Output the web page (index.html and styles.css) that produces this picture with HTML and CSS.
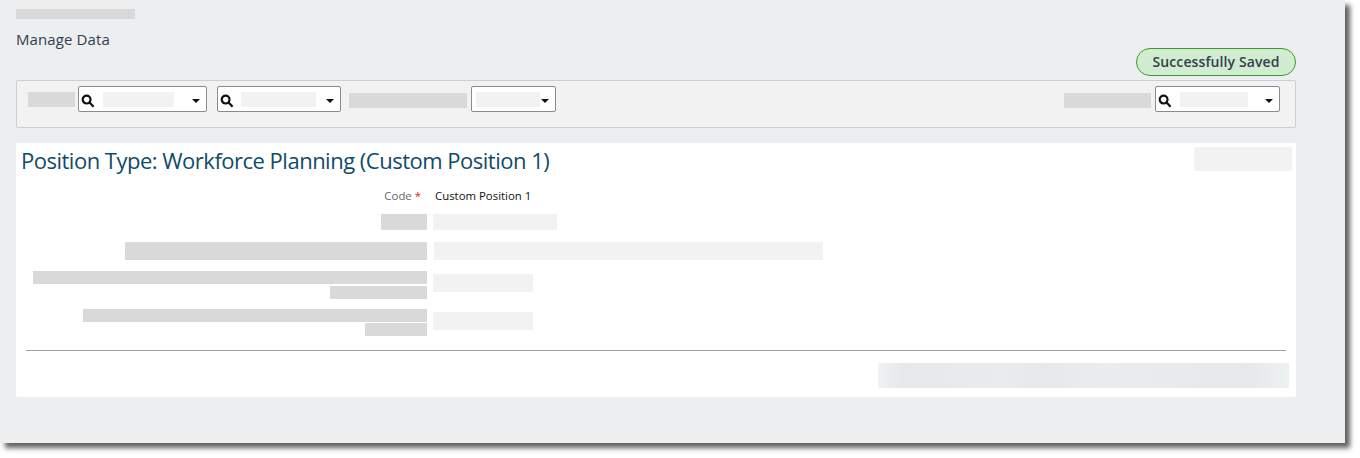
FILE: index.html
```html
<!DOCTYPE html>
<html lang="en">

<head>
    <meta charset="UTF-8">
    <meta name="viewport" content="width=device-width, initial-scale=1.0">
    <title>Manage Data</title>
    <link rel="stylesheet" href="styles.css">
</head>

<body>
    <div class="screen">
        <div class="crumb"></div>
        <div class="pageTitle">Manage Data</div>
        <div class="savedRow">
            <span class="savedPill">Successfully Saved</span>
        </div>

        <div class="toolbar">
            <div class="mask labelA"></div>
            <div class="select selectA">
                <svg class="searchIcon" viewBox="0 0 14 14"><circle cx="5.6" cy="5.6" r="3.9" /><path d="M8.6 8.6 12.6 12.8" /></svg>
                <div class="selectValue valueA"></div>
                <span class="caret"></span>
            </div>
            <div class="select selectB">
                <svg class="searchIcon" viewBox="0 0 14 14"><circle cx="5.6" cy="5.6" r="3.9" /><path d="M8.6 8.6 12.6 12.8" /></svg>
                <div class="selectValue valueB"></div>
                <span class="caret"></span>
            </div>
            <div class="mask labelB"></div>
            <div class="select selectC">
                <div class="selectValue valueC"></div>
                <span class="caret"></span>
            </div>
            <div class="mask labelC"></div>
            <div class="select selectD">
                <svg class="searchIcon" viewBox="0 0 14 14"><circle cx="5.6" cy="5.6" r="3.9" /><path d="M8.6 8.6 12.6 12.8" /></svg>
                <div class="selectValue valueD"></div>
                <span class="caret"></span>
            </div>
        </div>

        <div class="card">
            <div class="cardHead">
                <h1>Position Type: Workforce Planning (Custom Position 1)</h1>
                <div class="headAction"></div>
            </div>

            <div class="formRow rowCode">
                <div class="formLabel">Code <span class="required">*</span></div>
                <div class="formValue">Custom Position 1</div>
            </div>
            <div class="formRow rowOne">
                <div class="formLabel"><div class="mask lineOne"></div></div>
                <div class="fieldMask fieldOne"></div>
            </div>
            <div class="formRow rowTwo">
                <div class="formLabel"><div class="mask lineTwo"></div></div>
                <div class="fieldMask fieldTwo"></div>
            </div>
            <div class="formRow rowThree">
                <div class="formLabel">
                    <div class="mask lineThreeA"></div>
                    <div class="mask lineThreeB"></div>
                </div>
                <div class="fieldMask fieldThree"></div>
            </div>
            <div class="formRow rowFour">
                <div class="formLabel">
                    <div class="mask lineFourA"></div>
                    <div class="mask lineFourB"></div>
                </div>
                <div class="fieldMask fieldThree"></div>
            </div>

            <div class="divider"></div>
            <div class="footerMask"></div>
        </div>
    </div>
</body>

</html>
```

FILE: styles.css
```css
html,
body {
    margin: 0;
    padding: 0;
    background: white;
    overflow: hidden;
}

body {
    font-family: 'Open Sans', 'Noto Sans', sans-serif;
    width: 1360px;
    height: 458px;
}

.screen {
    box-sizing: border-box;
    width: 1345px;
    height: 443px;
    padding: 9px 49px 0 16px;
    background: #edeef0;
    box-shadow: 5px 5px 5px #606060;
}

.mask {
    background: #d9d9d9;
}

.crumb {
    width: 119px;
    height: 10px;
    background: #d9d9d9;
}

.pageTitle {
    margin-top: 10px;
    height: 20px;
    line-height: 20px;
    font-size: 15px;
    letter-spacing: 0.1px;
    color: #32404f;
}

.savedRow {
    display: flex;
    justify-content: flex-end;
    margin-top: -1px;
}

.savedPill {
    box-sizing: border-box;
    width: 160px;
    height: 28px;
    line-height: 26px;
    text-align: center;
    font-size: 14px;
    font-weight: 600;
    letter-spacing: 0.1px;
    color: #32404f;
    background: #d1ecd0;
    border: 1px solid #3c9a2e;
    border-radius: 14px;
}

.toolbar {
    box-sizing: border-box;
    display: flex;
    align-items: flex-start;
    height: 48px;
    margin-top: 4px;
    padding: 5px 15px 0 11px;
    background: #f2f2f2;
    border: 1px solid #c9cfd2;
    border-radius: 2px;
}

.labelA {
    width: 47px;
    height: 15px;
    margin: 6px 3px 0 0;
}

.labelB {
    width: 118px;
    height: 15px;
    margin: 7px 4px 0 8px;
}

.labelC {
    width: 87px;
    height: 15px;
    margin: 7px 4px 0 auto;
}

.select {
    box-sizing: border-box;
    position: relative;
    display: flex;
    align-items: center;
    height: 26px;
    background: white;
    border: 1px solid #848d96;
    border-radius: 2px;
}

.selectA {
    width: 129px;
}

.selectB {
    width: 124px;
    margin-left: 10px;
}

.selectC {
    width: 85px;
}

.selectD {
    width: 125px;
}

.searchIcon {
    flex: none;
    width: 14px;
    height: 14px;
    margin: 4px 0 0 2px;
    fill: none;
    stroke: #111;
    stroke-width: 2.2;
}

.selectValue {
    height: 15px;
    background: #f2f2f2;
}

.valueA {
    width: 71px;
    margin-left: 8px;
}

.valueB {
    width: 75px;
    margin-left: 7px;
}

.valueC {
    width: 64px;
    margin-left: 4px;
}

.valueD {
    width: 68px;
    margin-left: 8px;
}

.caret {
    position: absolute;
    right: 6.5px;
    top: 12px;
    width: 0;
    height: 0;
    border-left: 4px solid transparent;
    border-right: 4px solid transparent;
    border-top: 4px solid #111;
}

.card {
    box-sizing: border-box;
    height: 254px;
    margin-top: 15px;
    padding-top: 4px;
    background: white;
    border-radius: 2px;
}

.cardHead {
    display: flex;
    justify-content: space-between;
    align-items: flex-start;
    padding: 0 4px 0 5px;
}

h1 {
    margin: 0;
    font-size: 22px;
    font-weight: 400;
    letter-spacing: -0.5px;
    line-height: 26px;
    color: #0f4c68;
}

.headAction {
    width: 98px;
    height: 24px;
    background: #f2f2f2;
    border-radius: 2px;
}

.formRow {
    display: grid;
    grid-template-columns: 411px auto;
    column-gap: 6px;
    justify-content: start;
    align-items: start;
}

.formLabel {
    display: flex;
    flex-direction: column;
    align-items: flex-end;
}

.rowCode {
    margin-top: 14px;
    height: 18px;
    line-height: 18px;
    font-size: 11.4px;
}

.rowCode .formLabel {
    display: block;
    text-align: right;
    padding-right: 6px;
    box-sizing: border-box;
    color: #666;
}

.required {
    color: #d91c1c;
}

.formValue {
    margin-left: 2px;
    color: #111;
}

.rowOne {
    margin-top: 9px;
}

.rowTwo {
    margin-top: 12px;
}

.rowThree {
    margin-top: 11px;
}

.rowFour {
    margin-top: 10px;
}

.lineOne {
    width: 46px;
    height: 16px;
}

.lineTwo {
    width: 302px;
    height: 18px;
}

.lineThreeA {
    width: 394px;
    height: 13px;
}

.lineThreeB {
    width: 97px;
    height: 13px;
    margin-top: 2px;
}

.lineFourA {
    width: 344px;
    height: 13px;
}

.lineFourB {
    width: 62px;
    height: 13px;
    margin-top: 1px;
}

.fieldMask {
    background: #f2f2f2;
}

.fieldOne {
    width: 124px;
    height: 16px;
}

.fieldTwo {
    width: 389px;
    height: 18px;
    margin-left: 1px;
}

.fieldThree {
    width: 100px;
    height: 18px;
    margin-top: 3px;
}

.divider {
    height: 1px;
    margin: 14px 10px 0;
    background: #a3a3a3;
}

.footerMask {
    width: 411px;
    height: 25px;
    margin: 12px 7px 0 auto;
    background: linear-gradient(to right, #f0f2f3, #e5e9eb 6%, #e9ecee 30%, #e5e9eb 40%, #eaedef 55%, #e5e9eb 90%, #eef1f2);
}
```
